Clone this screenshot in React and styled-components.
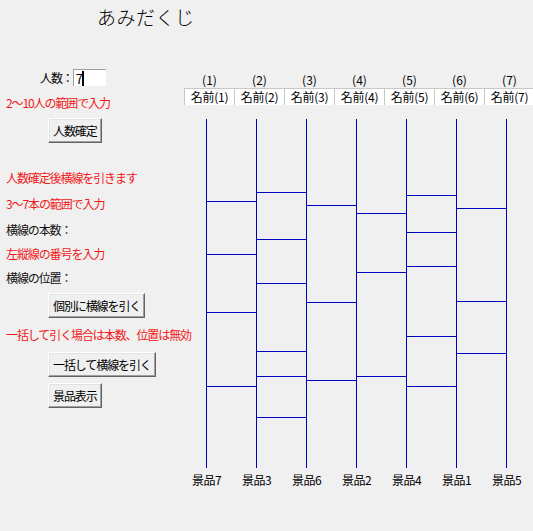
import React from 'react'
import styled, { createGlobalStyle } from 'styled-components'

const GlobalStyle = createGlobalStyle`
    html, body {
        margin: 0;
        padding: 0;
        background: #f0f0f0;
    }
    body {
        font-family: "Noto Sans CJK JP", "Noto Sans", sans-serif;
        font-size: 12px;
        color: #000;
    }
`

const Window = styled.div`
    width: 533px;
    height: 531px;
    overflow: hidden;
    background: #f0f0f0;
`
const Header = styled.div`
    height: 40px;
    padding-left: 97px;
    box-sizing: border-box;
`
const Title = styled.h1`
    margin: 0;
    padding-top: 3px;
    font-size: 19px;
    font-weight: 300;
    line-height: 28px;
    letter-spacing: 0.5px;
`
const Body = styled.div`
    display: flex;
`
const Controls = styled.div`
    width: 184px;
    display: flex;
    flex-direction: column;
    align-items: flex-start;
    letter-spacing: -1.1px;
`
const CountRow = styled.div`
    display: flex;
    align-items: center;
    margin-top: 28px;
    padding-left: 40px;
    height: 19px;
`
const CountInput = styled.div`
    width: 33px;
    height: 17px;
    background: #fff;
    border-top: 1px solid #a0a0a0;
    border-left: 1px solid #a0a0a0;
    display: flex;
    align-items: center;
    padding-left: 2px;
    box-sizing: border-box;
    font-size: 13px;
`
const Caret = styled.span`
    display: inline-block;
    width: 2px;
    height: 15px;
    background: #000;
    margin-left: 0;
`
const Text = styled.div`
    margin-top: ${p => p.$mt}px;
    padding-left: 6px;
    line-height: 16px;
    white-space: nowrap;
    color: ${p => (p.$warn ? '#f01818' : '#111')};
`
const Button = styled.button`
    margin-top: ${p => p.$mt}px;
    margin-left: 48px;
    height: 25px;
    padding: 0 4px;
    font-family: inherit;
    font-size: 12px;
    letter-spacing: -1.1px;
    color: #000;
    background: #f0f0f0;
    border: 1px solid;
    border-color: #fff #646464 #646464 #fff;
    box-shadow: inset -1px -1px 0 #a0a0a0, inset 1px 1px 0 #e3e3e3;
    white-space: nowrap;
`
const Board = styled.div`
    display: flex;
    flex-direction: column;
`
const Columns = styled.div`
    display: grid;
    grid-template-columns: repeat(7, 50px);
    margin-top: ${p => p.$mt || 0}px;
`
const Index = styled.div`
    text-align: center;
    line-height: 16px;
    padding-left: 1px;
`
const NameBox = styled.div`
    height: 17px;
    background: #fff;
    border-left: 1px solid #c8c8c8;
    border-top: 1px solid #c8c8c8;
    box-sizing: border-box;
    text-align: center;
    line-height: 15px;
    letter-spacing: -0.3px;
`
const Ladder = styled.svg`
    display: block;
    margin-top: 14px;
`
const Prize = styled.div`
    line-height: 16px;
    padding-left: 8px;
    letter-spacing: -0.5px;
`

const lanes = 7
const rungs = [
    [200, 253, 311, 385],
    [191, 238, 282, 350, 375, 416],
    [204, 301, 379],
    [212, 271, 375],
    [194, 231, 265, 335, 385],
    [207, 300, 352],
]
const prizes = ['景品7', '景品3', '景品6', '景品2', '景品4', '景品1', '景品5']

export default function App() {
    const top = 118
    const xs = Array.from({ length: lanes }, (_, i) => 22.5 + i * 50)
    return (
        <Window>
            <GlobalStyle />
            <Header>
                <Title>あみだくじ</Title>
            </Header>
            <Body>
                <Controls>
                    <CountRow>
                        <span>人数：</span>
                        <CountInput>7<Caret /></CountInput>
                    </CountRow>
                    <Text $mt={8} $warn>2〜10人の範囲で入力</Text>
                    <Button $mt={7}>人数確定</Button>
                    <Text $mt={27} $warn>人数確定後横線を引きます</Text>
                    <Text $mt={10} $warn>3〜7本の範囲で入力</Text>
                    <Text $mt={10}>横線の本数：</Text>
                    <Text $mt={8} $warn>左縦線の番号を入力</Text>
                    <Text $mt={8}>横線の位置：</Text>
                    <Button $mt={7}>個別に横線を引く</Button>
                    <Text $mt={9} $warn>一括して引く場合は本数、位置は無効</Text>
                    <Button $mt={9}>一括して横線を引く</Button>
                    <Button $mt={6}>景品表示</Button>
                </Controls>
                <Board>
                    <Columns $mt={32}>
                        {xs.map((_, i) => <Index key={i}>({i + 1})</Index>)}
                    </Columns>
                    <Columns>
                        {xs.map((_, i) => <NameBox key={i}>名前({i + 1})</NameBox>)}
                    </Columns>
                    <Ladder width="349" height="350" viewBox="0 0 349 350">
                        <g stroke="#0000c0" strokeWidth="1.6" shapeRendering="crispEdges">
                            {xs.map((x, i) => (
                                <line key={`v${i}`} x1={x} y1={0} x2={x} y2={349} />
                            ))}
                            {rungs.map((ys, i) => ys.map(y => (
                                <line key={`h${i}-${y}`} x1={xs[i]} y1={y - top + 0.5} x2={xs[i + 1]} y2={y - top + 0.5} />
                            )))}
                        </g>
                    </Ladder>
                    <Columns $mt={3}>
                        {prizes.map(p => <Prize key={p}>{p}</Prize>)}
                    </Columns>
                </Board>
            </Body>
        </Window>
    )
}
